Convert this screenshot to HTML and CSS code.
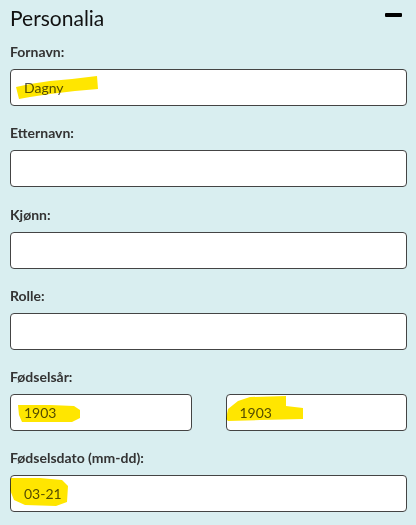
FILE: index.html
```html
<!DOCTYPE html>
<html lang="no">
<head>
<meta charset="utf-8">
<link rel="stylesheet" href="styles.css">
</head>
<body>
<section class="panel">
  <header class="panel-head">
    <h2 class="title">Personalia</h2>
    <span class="collapse" aria-label="Skjul"></span>
  </header>

  <div class="field">
    <label class="label">Fornavn:</label>
    <input class="input" type="text" value="Dagny">
  </div>

  <div class="field">
    <label class="label">Etternavn:</label>
    <input class="input" type="text">
  </div>

  <div class="field">
    <label class="label">Kjønn:</label>
    <input class="input" type="text">
  </div>

  <div class="field">
    <label class="label">Rolle:</label>
    <input class="input" type="text">
  </div>

  <div class="field">
    <label class="label">Fødselsår:</label>
    <div class="row">
      <input class="input" type="text" value="1903">
      <input class="input" type="text" value="1903">
    </div>
  </div>

  <div class="field">
    <label class="label">Fødselsdato (mm-dd):</label>
    <input class="input" type="text" value="03-21">
  </div>
</section>
<svg class="marks" viewBox="0 0 416 525" aria-hidden="true">
  <polygon points="16,87 30,84 50,81 72,79 97,76 98,89 75,91 50,94 30,97 19,99"/>
  <polygon points="18,405 50,405 74,406 80,410 80,418 72,422 22,422 19,415"/>
  <polygon points="226,419 228,409 238,401 250,397 286,396 286,406 303,408 303,419 260,420 228,421"/>
  <polygon points="11,478 40,478 62,480 68,486 67,502 56,506 25,505 14,500 10,490"/>
</svg>
</body>
</html>
```
FILE: styles.css
```css
* { box-sizing: border-box; }
html, body { margin: 0; height: 100%; }
body {
  background: #d9eef0;
  font-family: Lato, "Noto Sans", sans-serif;
  color: #333;
  position: relative;
}
.panel { padding: 0 9px 0 10px; }
.panel-head {
  display: flex;
  justify-content: space-between;
  align-items: center;
  height: 42px;
  padding-bottom: 6px;
}
.title {
  margin: 0;
  font-size: 21px;
  font-weight: 400;
  color: #111;
  line-height: 26px;
}
.collapse {
  width: 17px;
  height: 4px;
  background: #000;
  border-radius: 1px;
  margin-right: 5px;
  margin-top: -6px;
}
.field { margin-bottom: 17.3px; }
.label {
  display: block;
  font-size: 14px;
  font-weight: 700;
  line-height: 20px;
  margin-bottom: 7px;
  color: #333;
}
.input {
  display: block;
  width: 100%;
  height: 37px;
  border: 1px solid #444;
  border-radius: 4px;
  background: #fff;
  font-family: Lato, "Noto Sans", sans-serif;
  font-size: 14px;
  color: #555;
  padding: 0 13px;
  margin: 0;
  outline: none;
}
.row {
  display: grid;
  grid-template-columns: 1fr 1fr;
  column-gap: 34px;
}
.marks {
  position: absolute;
  left: 0;
  top: 0;
  width: 416px;
  height: 525px;
  pointer-events: none;
  mix-blend-mode: multiply;
  fill: #ffe600;
}
```
